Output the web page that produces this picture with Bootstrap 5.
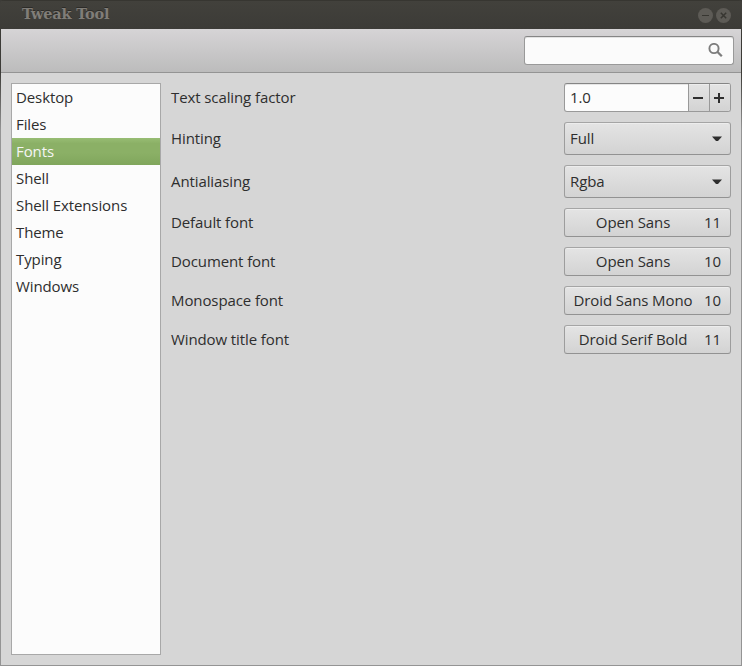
<!DOCTYPE html>
<html lang="en">
<head>
<meta charset="utf-8">
<meta name="viewport" content="width=device-width, initial-scale=1">
<title>Tweak Tool</title>
<link href="https://cdn.jsdelivr.net/npm/bootstrap@5.3.0/dist/css/bootstrap.min.css" rel="stylesheet">
<style>
  body { font: 15px/27px "Open Sans", sans-serif; letter-spacing: -.1px; color: #2e2e2e; background: #d6d6d6; height: 666px; overflow: hidden; }
  .window { height: 666px; background: linear-gradient(#3c3b37 72px, #949494 130px); padding: 0 1px 1px; }
  .titlebar { height: 29px; margin: 0 -1px; padding: 0 10px 0 22px; background: linear-gradient(#373631 0, #373631 1px, #42413c 1px, #3c3b37 100%); border-top-right-radius: 4px; border-top-left-radius: 4px; }
  .titlebar-text { font: bold 14.5px/28px "DejaVu Serif", serif; letter-spacing: -.2px; color: #807d78; text-shadow: 0 -1px #2c2b28; }
  .toolbar { height: 44px; padding: 7px 7px 0; background: linear-gradient(#d6d4d6, #bcbcbc); border-bottom: 1px solid #949494; }
  .search { width: 210px; height: 29px; padding-right: 10px; border: 1px solid #999; border-top-color: #858585; border-radius: 3px; background: #fbfbfb; box-shadow: inset 0 1px #e2e2e2; }
  .content-area { background: #d6d6d6; padding: 10px; gap: 10px; }
  .sidebar { width: 150px; border: 1px solid #a8a8a8; background: #fcfcfc; }
  .sidebar .list-group-item { height: 27px; padding: 0 4px; border: 0; background: none; color: #2e2e2e; line-height: 27px; }
  .sidebar .list-group-item.active { margin: 0; color: #f5f5f5; background: linear-gradient(#98bd74, #8bb066 20%, #8bb066 55%, #80a65c); }
  .settings { gap: 10px; }
  .control { width: 167px; height: 29px; border: 1px solid #999; border-radius: 3px; color: #2e2e2e; line-height: 27px; }
  .control.raised, .step { background: linear-gradient(#e4e4e4, #d3d3d3); box-shadow: inset 0 1px #ededed; }
  .control.raised { border-color: #a5a5a5 #9d9d9d #929292; }
  .control.combo { height: 33px; padding: 0 8px 0 5px; line-height: 30px; }
  .combo span { height: 31px; }
  .spin { background: #fcfcfc; border-top-color: #858585; box-shadow: inset 0 1px #e6e6e6; overflow: hidden; }
  .spin-value { padding-left: 5px; }
  .step { width: 21px; border: 0; border-left: 1px solid #999; padding: 0 2px 0 0; }
  .font-size-value { width: 26px; }
  .font-name { padding-right: 3px; }
</style>
<script src="https://cdn.jsdelivr.net/npm/bootstrap@5.3.0/dist/js/bootstrap.bundle.min.js"></script>
</head>
<body>
<div class="window d-flex flex-column">
  <header class="titlebar d-flex justify-content-between flex-shrink-0">
    <span class="titlebar-text">Tweak Tool</span>
    <svg width="34" height="29" fill="none" stroke="#373631">
      <circle cx="7.500" cy="15.500" r="7.500" fill="#5d5b56" stroke="none"/>
      <path d="M4 15.500h7"/>
      <circle cx="25.500" cy="15.500" r="7.500" fill="#5d5b56" stroke="none"/>
      <path d="M22.800 12.800l5.400 5.400m0-5.400l-5.400 5.400" stroke-width="1.500"/>
    </svg>
  </header>
  <div class="toolbar d-flex justify-content-end flex-shrink-0">
    <div class="search d-flex align-items-center justify-content-end">
      <svg width="15" height="15" fill="none" stroke="#7d7d7d">
        <circle cx="6" cy="5.500" r="4.600" stroke-width="1.900"/>
        <path d="M9.300 8.800l4.500 4.500" stroke-width="2.300"/>
      </svg>
    </div>
  </div>
  <main class="content-area d-flex flex-grow-1">
    <nav class="sidebar list-group list-group-flush flex-shrink-0">
      <a class="list-group-item">Desktop</a>
      <a class="list-group-item">Files</a>
      <a class="list-group-item active">Fonts</a>
      <a class="list-group-item">Shell</a>
      <a class="list-group-item">Shell Extensions</a>
      <a class="list-group-item">Theme</a>
      <a class="list-group-item">Typing</a>
      <a class="list-group-item">Windows</a>
    </nav>
    <section class="settings d-flex flex-column flex-grow-1">
      <div class="d-flex justify-content-between align-items-center">
        <span>Text scaling factor</span>
        <div class="control spin d-flex">
          <span class="spin-value flex-grow-1">1.0</span>
          <button class="step d-flex align-items-center justify-content-center"><svg width="12" height="12" stroke="#2e2e2e" stroke-width="2"><path d="M1 6h10"/></svg></button>
          <button class="step d-flex align-items-center justify-content-center"><svg width="12" height="12" stroke="#2e2e2e" stroke-width="2"><path d="M1 6h10M6 1v10"/></svg></button>
        </div>
      </div>
      <div class="d-flex justify-content-between align-items-center">
        <span>Hinting</span>
        <div class="control raised combo d-flex align-items-center justify-content-between"><span>Full</span><svg width="10" height="6" fill="#2e2e2e"><path d="M0 .5h10L6 5H4z"/></svg></div>
      </div>
      <div class="d-flex justify-content-between align-items-center">
        <span>Antialiasing</span>
        <div class="control raised combo d-flex align-items-center justify-content-between"><span>Rgba</span><svg width="10" height="6" fill="#2e2e2e"><path d="M0 .5h10L6 5H4z"/></svg></div>
      </div>
      <div class="d-flex justify-content-between align-items-center">
        <span>Default font</span>
        <div class="control raised d-flex text-center"><span class="font-name flex-grow-1">Open Sans</span><span class="font-size-value text-start">11</span></div>
      </div>
      <div class="d-flex justify-content-between align-items-center">
        <span>Document font</span>
        <div class="control raised d-flex text-center"><span class="font-name flex-grow-1">Open Sans</span><span class="font-size-value text-start">10</span></div>
      </div>
      <div class="d-flex justify-content-between align-items-center">
        <span>Monospace font</span>
        <div class="control raised d-flex text-center"><span class="font-name flex-grow-1">Droid Sans Mono</span><span class="font-size-value text-start">10</span></div>
      </div>
      <div class="d-flex justify-content-between align-items-center">
        <span>Window title font</span>
        <div class="control raised d-flex text-center"><span class="font-name flex-grow-1">Droid Serif Bold</span><span class="font-size-value text-start">11</span></div>
      </div>
    </section>
  </main>
</div>
</body>
</html>
